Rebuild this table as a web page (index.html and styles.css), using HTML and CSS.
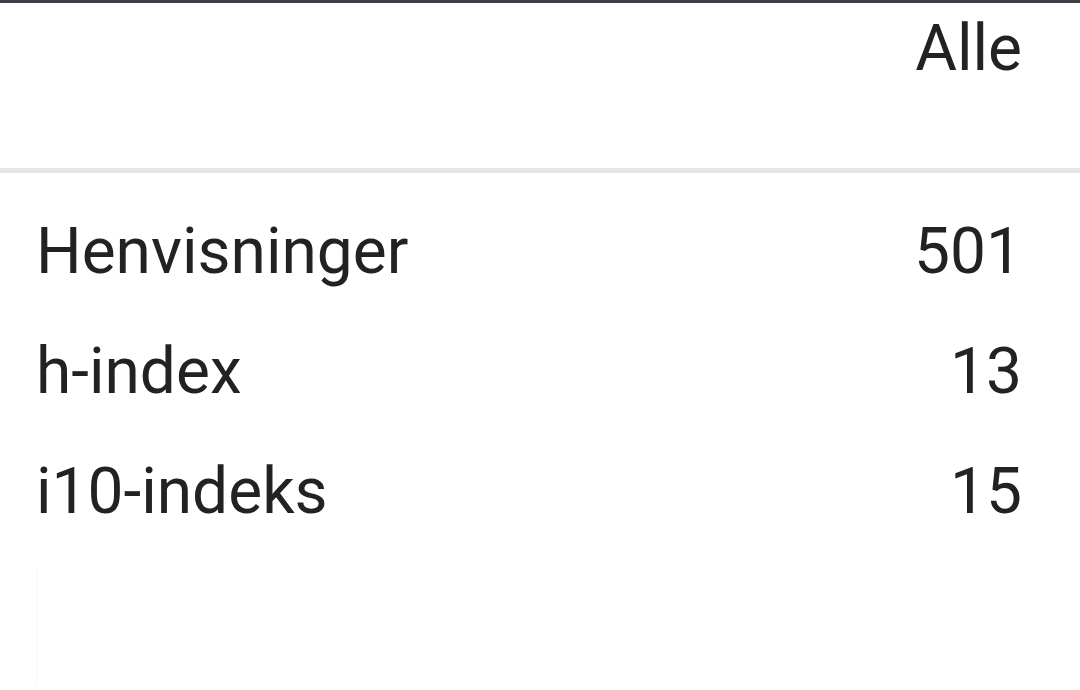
FILE: index.html
```html
<!DOCTYPE html>
<html lang="no">
<head>
<meta charset="utf-8">
<title>Sitert av</title>
<link rel="stylesheet" href="styles.css">
</head>
<body>
<div class="page">
  <div class="head">
    <span class="head-cell">Alle</span>
  </div>
  <div class="stats">
    <div class="row"><span class="label">Henvisninger</span><span class="value">501</span></div>
    <div class="row"><span class="label">h-index</span><span class="value">13</span></div>
    <div class="row"><span class="label">i10-indeks</span><span class="value">15</span></div>
  </div>
  <div class="chart"></div>
</div>
</body>
</html>
```
FILE: styles.css
```css
html, body {
  margin: 0;
  padding: 0;
  background: #ffffff;
}
body {
  font-family: Roboto, "Liberation Sans", Arial, sans-serif;
  color: #222222;
  width: 1080px;
  height: 690px;
  overflow: hidden;
}
.page {
  border-top: 3px solid #3c3f47;
}
.head {
  display: flex;
  justify-content: flex-end;
  padding: 6px 58px 79px 36px;
  border-bottom: 5px solid #e6e6e6;
  font-size: 64px;
  line-height: 80px;
}
.stats {
  padding-top: 19px;
  font-size: 64px;
  line-height: 80px;
}
.row {
  display: flex;
  justify-content: space-between;
  padding: 20px 58px 20px 36px;
}
.chart {
  margin: 14px 0 0 36px;
  height: 120px;
  border-left: 1px solid #f6f6f6;
}
```
